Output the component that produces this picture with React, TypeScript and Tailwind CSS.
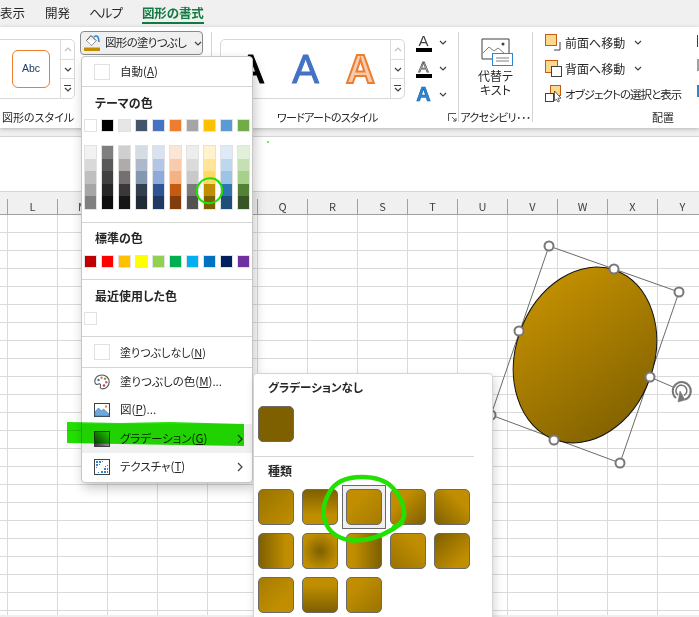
import React from "react";

const theme = ["bg-[#ffffff]","bg-[#000000]","bg-[#e7e6e6]","bg-[#44546a]","bg-[#4472c4]","bg-[#ed7d31]","bg-[#a5a5a5]","bg-[#ffc000]","bg-[#5b9bd5]","bg-[#70ad47]"];
const tints = [
  ["bg-[#f2f2f2]","bg-[#d9d9d9]","bg-[#bfbfbf]","bg-[#a6a6a6]","bg-[#808080]"],
  ["bg-[#7f7f7f]","bg-[#595959]","bg-[#404040]","bg-[#262626]","bg-[#0d0d0d]"],
  ["bg-[#d0cece]","bg-[#aeabab]","bg-[#757070]","bg-[#3a3838]","bg-[#171616]"],
  ["bg-[#d6dce4]","bg-[#adb9ca]","bg-[#8496b0]","bg-[#323f4f]","bg-[#222b35]"],
  ["bg-[#d9e2f3]","bg-[#b4c6e7]","bg-[#8eaadb]","bg-[#2f5496]","bg-[#1f3864]"],
  ["bg-[#fbe5d5]","bg-[#f7cbac]","bg-[#f4b183]","bg-[#c55a11]","bg-[#833c0b]"],
  ["bg-[#ededed]","bg-[#dbdbdb]","bg-[#c9c9c9]","bg-[#7b7b7b]","bg-[#525252]"],
  ["bg-[#fff2cc]","bg-[#fee599]","bg-[#ffd965]","bg-[#bf8f00]","bg-[#7f6000]"],
  ["bg-[#deeaf6]","bg-[#bdd7ee]","bg-[#9dc3e6]","bg-[#2e75b5]","bg-[#1f4e79]"],
  ["bg-[#e2efd9]","bg-[#c5e0b3]","bg-[#a8d08d]","bg-[#538135]","bg-[#375623]"],
];
const standard = ["bg-[#c00000]","bg-[#ff0000]","bg-[#ffc000]","bg-[#ffff00]","bg-[#92d050]","bg-[#00b050]","bg-[#00b0f0]","bg-[#0070c0]","bg-[#002060]","bg-[#7030a0]"];
const grads = [
  "bg-[linear-gradient(135deg,#9a7400,#c08e00)]",
  "bg-[linear-gradient(180deg,#7f6000,#c08e00_75%)]",
  "bg-[linear-gradient(135deg,#c08e00_30%,#a67c00)]",
  "bg-[linear-gradient(135deg,#c08e00_30%,#7f6000)]",
  "bg-[linear-gradient(45deg,#7f6000,#c08e00_70%)]",
  "bg-[linear-gradient(90deg,#7f6000,#c08e00_80%)]",
  "bg-[radial-gradient(circle,#7f6000,#c08e00_75%)]",
  "bg-[linear-gradient(90deg,#c08e00_20%,#7f6000)]",
  "bg-[linear-gradient(225deg,#c08e00_25%,#9a7400)]",
  "bg-[linear-gradient(135deg,#7f6000,#c08e00_80%)]",
  "bg-[linear-gradient(135deg,#a67c00,#c08e00_70%)]",
  "bg-[linear-gradient(180deg,#c08e00_20%,#7f6000)]",
  "bg-[linear-gradient(135deg,#c08e00_25%,#9a7400)]",
];
const cols = ["L","M","N","O","P","Q","R","S","T","U","V","W","X","Y"];

function Chev({ className = "", stroke = "#404040" }: { className?: string; stroke?: string }) {
  return (
    <svg width="8" height="5" viewBox="0 0 8 5" className={`shrink-0 ${className}`}>
      <path d="M1 1l3 3 3-3" fill="none" stroke={stroke} strokeWidth="1.2" />
    </svg>
  );
}
function ChevRight() {
  return (
    <svg width="6" height="10" viewBox="0 0 6 10" className="ml-auto mr-[9px]">
      <path d="M1 1l4 4-4 4" fill="none" stroke="#404040" strokeWidth="1.2" />
    </svg>
  );
}
function ScrollCol() {
  return (
    <div className="w-[14px] h-full flex flex-col border-l border-[#dcdcdc]">
      <div className="h-[20px] flex items-center justify-center border-b border-[#dcdcdc]"><svg width="8" height="5" viewBox="0 0 8 5"><path d="M1 4l3-3 3 3" fill="none" stroke="#c0c0c0" strokeWidth="1.2" /></svg></div>
      <div className="h-[19px] flex items-center justify-center border-b border-[#dcdcdc]"><Chev /></div>
      <div className="flex-1 flex flex-col items-center justify-center gap-[1px]"><div className="w-[7px] h-px bg-[#404040]" /><Chev /></div>
    </div>
  );
}
function Sep() {
  return <div className="w-px bg-[#d4d4d4] mt-[5px] mb-[6px] shrink-0" />;
}
function Label({ children, className = "" }: { children: React.ReactNode; className?: string }) {
  return <div className={`h-[21px] text-[11px] leading-[21px] whitespace-nowrap ${className}`}>{children}</div>;
}
function TextA({ bar, outline }: { bar?: boolean; outline?: boolean }) {
  return (
    <div className="h-[26px] flex items-center">
      <div className="w-[17px] flex flex-col items-center">
        {bar ? (
          <>
            <span className={`font-['Liberation_Sans'] text-[15px] leading-[13px] ${outline ? "text-white [-webkit-text-stroke:0.8px_#555555]" : "text-[#404040]"}`}>A</span>
            <div className="w-[16px] h-[4px] bg-black mt-[1px]" />
          </>
        ) : (
          <span className="font-['Liberation_Sans'] font-bold text-[20px] leading-[18px] text-[#2e86d0] [-webkit-text-stroke:0.6px_#0f5fa8]">A</span>
        )}
      </div>
      <Chev className="ml-[7px]" />
    </div>
  );
}
function ArrangeRow({ icon, text, chev, tight }: { icon: React.ReactNode; text: string; chev?: boolean; tight?: boolean }) {
  return (
    <div className="h-[26px] flex items-center">
      <div className="w-[20px] h-[20px] mr-0">{icon}</div>
      <span className={`whitespace-nowrap ${tight ? "text-[11.5px] tracking-[-0.95px]" : "text-[12px]"}`}>{text}</span>
      {chev && <Chev className="ml-[9px]" />}
    </div>
  );
}
function Swatch({ c }: { c: string }) {
  return <div className={`w-[13px] h-[13px] border border-[#e2e2e2] ${c}`} />;
}
function MenuHeading({ children, className = "" }: { children: React.ReactNode; className?: string }) {
  return <div className={`pl-[13px] font-bold text-[12px] leading-[16px] ${className}`}>{children}</div>;
}
function MenuSep({ className = "" }: { className?: string }) {
  return <div className={`h-px bg-[#d4d4d4] ${className}`} />;
}
function MenuRow({ icon, children, arrow, className = "" }: { icon: React.ReactNode; children: React.ReactNode; arrow?: boolean; className?: string }) {
  return (
    <div className={`h-[28px] flex items-center pl-[12px] text-[11.5px] whitespace-nowrap ${className}`}>
      <div className="w-[16px] h-[17px] mr-[10px] flex items-center justify-center shrink-0">{icon}</div>
      <span>{children}</span>
      {arrow && <ChevRight />}
    </div>
  );
}
const U = ({ children }: { children: React.ReactNode }) => <span className="underline underline-offset-1">{children}</span>;

function ColorMenu() {
  return (
    <div className="absolute left-[81px] top-[56px] w-[172px] h-[427px] bg-white border border-[#c6c6c6] rounded-[4px] shadow-[2px_5px_12px_rgba(0,0,0,0.22)] z-20 flex flex-col">
      <div className="h-[29px] flex items-center pl-[12px] text-[11.5px]">
        <div className="w-[16px] h-[16px] border border-[#e2e2e2] mr-[10px]" />
        <span>自動(<U>A</U>)</span>
      </div>
      <MenuSep />
      <MenuHeading className="mt-[8px]">テーマの色</MenuHeading>
      <div className="flex gap-[4px] pl-[2px] mt-[8px]">{theme.map((c, i) => <Swatch key={i} c={c} />)}</div>
      <div className="flex gap-[4px] pl-[2px] mt-[13px]">
        {tints.map((col, i) => (
          <div key={i} className="w-[13px] h-[65px] border border-[#e2e2e2] flex flex-col">
            {col.map((c, j) => <div key={j} className={`flex-1 ${c}`} />)}
          </div>
        ))}
      </div>
      <MenuSep className="mt-[12px]" />
      <MenuHeading className="mt-[7px]">標準の色</MenuHeading>
      <div className="flex gap-[4px] pl-[2px] mt-[9px]">{standard.map((c, i) => <Swatch key={i} c={c} />)}</div>
      <MenuSep className="mt-[11px]" />
      <MenuHeading className="mt-[8px]">最近使用した色</MenuHeading>
      <div className="pl-[2px] mt-[8px]"><Swatch c="bg-white" /></div>
      <MenuSep className="mt-[11px]" />
      <div className="h-[30px] flex items-center pl-[12px] text-[11px]">
        <div className="w-[16px] h-[16px] border border-[#e2e2e2] mr-[10px]" />
        <span>塗りつぶしなし(<U>N</U>)</span>
      </div>
      <MenuSep />
      <MenuRow icon={
        <svg width="16" height="16" viewBox="0 0 16 16">
          <path d="M8 1C3.500 1 .8 4 .8 7.500c0 3 2.200 3.200 3.800 2.600 1.600-.6 2.400.4 1.800 1.800-.6 1.600.4 3 2 3 3.600 0 6.800-3.200 6.800-7C15.200 4 12 1 8 1z" fill="#fff" stroke="#555" strokeWidth="1.100" />
          <circle cx="4.500" cy="6" r="1.200" fill="#2e75b5" /><circle cx="7.500" cy="3.800" r="1.200" fill="#ed7d31" /><circle cx="11" cy="4.800" r="1.200" fill="#70ad47" /><circle cx="12.300" cy="8.300" r="1.200" fill="#c55aa0" /><circle cx="10" cy="11.500" r="1.200" fill="#d13438" />
        </svg>}>塗りつぶしの色(<U>M</U>)...</MenuRow>
      <MenuRow icon={
        <svg width="16" height="14" viewBox="0 0 16 14">
          <rect x=".5" y=".5" width="15" height="13" fill="#fff" stroke="#404040" />
          <path d="M1 13V9l3.500-4 3 3 2-2 5.500 5v2z" fill="#6fa8dc" stroke="#2e75b5" strokeWidth=".6" />
          <rect x="11" y="2.500" width="2" height="2" fill="#ed7d31" />
        </svg>}>図(<U>P</U>)...</MenuRow>
      <MenuRow arrow className="h-[29px] bg-[#f0f0f0]" icon={
        <svg width="16" height="16" viewBox="0 0 16 16">
          <defs><linearGradient id="gi" x1="0" y1="1" x2="1" y2="0"><stop offset="0" stopColor="#303030" /><stop offset="1" stopColor="#e8e8e8" /></linearGradient></defs>
          <rect x=".5" y=".5" width="15" height="15" fill="url(#gi)" stroke="#404040" />
        </svg>}>グラデーション(<U>G</U>)</MenuRow>
      <MenuRow arrow icon={
        <svg width="16" height="16" viewBox="0 0 16 16">
          <rect x=".5" y=".5" width="15" height="15" fill="#fff" stroke="#404040" />
          <path d="M2 2h2v2H2zM5 2h2v2H5zM8 2h1v1H8zM2 5h2v2H2zM5 5h1v1H5zM2 8h1v1H2zM13 6h1v1h-1zM11 7h1v1h-1zM10 9h2v2h-2zM13 9h1v2h-1zM7 12h2v2H7zM10 12h2v2h-2zM13 12h1v2h-1zM4 13h1v1H4z" fill="#2e86d0" />
        </svg>}>テクスチャ(<U>T</U>)</MenuRow>
    </div>
  );
}

function GradientMenu() {
  return (
    <div className="absolute left-[253px] top-[373px] w-[240px] h-[262px] bg-white border border-[#d4d4d4] rounded-[4px] shadow-[2px_4px_10px_rgba(0,0,0,0.16)] z-30">
      <div className="h-[28px] flex items-center pl-[14px] font-bold text-[11.5px]">グラデーションなし</div>
      <div className="pl-[4px] mt-[4px]"><div className="w-[36px] h-[36px] rounded-[5px] border border-[#6a6a6a] bg-[#7f6000]" /></div>
      <MenuSep className="mt-[14px] w-[220px]" />
      <div className="h-[28px] flex items-center pl-[14px] font-bold text-[12px]">種類</div>
      <div className="grid grid-cols-[repeat(5,44px)] auto-rows-[44px]">
        {grads.map((g, i) => (
          <div key={i} className={`flex items-center justify-center ${i === 2 ? "border border-[#6a6a6a] bg-[#efefef]" : ""}`}>
            <div className={`w-[36px] h-[36px] rounded-[5px] border border-[#6a6a6a] ${g}`} />
          </div>
        ))}
      </div>
    </div>
  );
}

function Shape() {
  const handles = [[549,246],[614,269],[679,292],[519,331],[650,377],[491,415],[554,440],[620,463]];
  return (
    <svg width="699" height="617" viewBox="0 0 699 617" className="absolute left-0 top-0 z-10 pointer-events-none">
      <defs>
        <linearGradient id="oval" gradientUnits="userSpaceOnUse" x1="535" y1="285" x2="640" y2="430" gradientTransform="rotate(-19.500 585 355)">
          <stop offset="0" stopColor="#c49000" /><stop offset="1" stopColor="#7f6000" />
        </linearGradient>
      </defs>
      <polygon points="549,246 679,292 620,463 491,415" fill="none" stroke="#6a6a6a" strokeWidth="1" />
      <ellipse cx="585" cy="355" rx="69" ry="90" transform="rotate(19.500 585 355)" fill="url(#oval)" stroke="#111" strokeWidth="1" />
      <line x1="650" y1="377" x2="673" y2="387" stroke="#6a6a6a" />
      {handles.map(([x, y], i) => <circle key={i} cx={x} cy={y} r="4.500" fill="#fff" stroke="#777" strokeWidth="2" />)}
      <g fill="none" stroke="#777">
        <path d="M676 398a9 9 0 1 1 9 1.500" strokeWidth="2" />
        <path d="M678 395a5.500 5.500 0 1 1 6 .5" strokeWidth="1.600" />
        <path d="M680 391l-2 11 7-2z" fill="#777" strokeWidth=".6" />
      </g>
    </svg>
  );
}

function Scribbles() {
  return (
    <>
      <svg width="699" height="617" viewBox="0 0 699 617" className="absolute left-0 top-0 z-40 pointer-events-none mix-blend-multiply">
        <path d="M67 422 L120 423 L170 422 L244 424 L244 446 L180 445 L120 444 L67 443z" fill="#22e000" />
      </svg>
      <svg width="699" height="617" viewBox="0 0 699 617" className="absolute left-0 top-0 z-40 pointer-events-none">
        <path d="M199 184c3-5 10-7 16-5 6 3 8 9 7 14-2 7-8 11-15 10-7-1-11-7-10-13 0-3 1-5 3-7" fill="none" stroke="#22e000" strokeWidth="2" />
        <path d="M394 527c5-2 9-6 10-11 1-8-3-20-12-29-8-8-18-10-30-10-14 0-27 4-33 16-5 9-7 19-4 28 3 9 11 17 24 19 15 2 31-3 44-11 3-2 6-4 9-6" fill="none" stroke="#22e000" strokeWidth="4.500" strokeLinecap="round" />
        <rect x="267" y="141" width="2" height="2" fill="#6fe85f" />
      </svg>
    </>
  );
}

export default function App() {
  return (
    <div className="relative w-[699px] h-[617px] overflow-hidden bg-white text-[#262626] flex flex-col font-['Noto_Sans_CJK_JP','Noto_Sans',sans-serif] [font-feature-settings:'palt']">
      {/* tabs */}
      <div className="h-[27px] shrink-0 bg-[#f0f0f0] flex gap-[20px] text-[12.500px] leading-[26px]">
        <span>表示</span><span>開発</span><span className="-ml-px tracking-[-1px]">ヘルプ</span>
        <span className="h-[24px] font-bold text-[#107c41] border-b-2 border-[#107c41] tracking-[-0.1px]">図形の書式</span>
      </div>
      {/* ribbon */}
      <div className="h-[101px] shrink-0 bg-white flex shadow-[0_1px_4px_rgba(0,0,0,0.25)] z-[1] relative">
        <div className="w-[211px] shrink-0 flex flex-col">
          <div className="h-[80px] flex">
            <div className="w-[75px] h-[60px] mt-[12px] border border-l-0 border-[#d8d8d8] rounded-r-[5px] flex shrink-0">
              <div className="w-[60px] h-full flex items-center pl-[12px]">
                <div className="w-[38px] h-[38px] rounded-[6px] border border-[#ed7d31] bg-white flex items-center justify-center font-['Liberation_Sans'] text-[10.500px] text-[#1f3864]">Abc</div>
              </div>
              <ScrollCol />
            </div>
            <div className="ml-[5px] mt-[4px] w-[123px] h-[24px] rounded-[4px] border border-[#8a8a8a] bg-[#f0f0f0] flex items-center pl-[3px] text-[11.5px] tracking-[-0.7px] whitespace-nowrap">
              <svg width="17" height="17" viewBox="0 0 17 17" className="mr-[4px] shrink-0 -mt-[2px]">
                <path d="M7 1.500l5 5-4.500 5-5-5z" fill="#f0f0f0" stroke="#404040" strokeWidth="1" />
                <path d="M3 6.500h9l-4.500 5-5-5z" fill="#ffffff" />
                <path d="M10 3c2-2 4-1 4.500 1.500L15 8" fill="none" stroke="#2e86d0" strokeWidth="1.500" />
                <rect x="0" y="13.500" width="16" height="3.500" fill="#bf8f00" />
              </svg>
              <span>図形の塗りつぶし</span>
              <Chev className="ml-[8px]" />
            </div>
          </div>
          <Label className="pl-[2px]">図形のスタイル</Label>
        </div>
        <Sep />
        <div className="w-[246px] shrink-0 flex flex-col">
          <div className="h-[80px] flex">
            <div className="ml-[8px] w-[185px] h-[60px] mt-[12px] border border-[#d8d8d8] rounded-[5px] flex items-center shrink-0">
              <div className="w-[169px] flex pl-[2px] font-['Liberation_Sans'] text-[40px] leading-[44px]">
                <span className="w-[55px] text-center text-black [-webkit-text-stroke:1px_#000000]">A</span>
                <span className="w-[55px] text-center text-[#4472c4] [-webkit-text-stroke:1px_#4472c4]">A</span>
                <span className="w-[55px] text-center font-bold text-[#f8cbad] [-webkit-text-stroke:2px_#ed7d31]">A</span>
              </div>
              <ScrollCol />
            </div>
            <div className="ml-[10px] mt-[3px] flex flex-col">
              <TextA bar />
              <TextA bar outline />
              <TextA />
            </div>
          </div>
          <div className="flex items-center">
            <Label className="ml-[65px] tracking-[-0.7px]">ワードアートのスタイル</Label>
            <svg width="9" height="9" viewBox="0 0 9 9" className="ml-[70px]"><path d="M.5 8V.5H8M4 4l4 4M8 5v3H5" fill="none" stroke="#555" /></svg>
          </div>
        </div>
        <Sep />
        <div className="w-[73px] shrink-0 flex flex-col items-center">
          <div className="h-[80px] flex flex-col items-center">
            <svg width="32" height="30" viewBox="0 0 32 30" className="mt-[11px] ml-[3px]">
              <path d="M21 21H1V1h27v14" fill="none" stroke="#404040" />
              <path d="M2 15l6-6 5 4 4-3 6 5" fill="none" stroke="#808080" />
              <circle cx="22" cy="6" r="1.500" fill="#404040" />
              <rect x="11.500" y="15.500" width="20" height="12" fill="#fff" stroke="#2e86d0" />
              <path d="M15 20h13M15 23h13" stroke="#808080" />
            </svg>
            <div className="mt-[1px] text-[12px] leading-[14px] text-center">代替テ</div>
            <div className="text-[12px] leading-[14px] text-center">キスト</div>
          </div>
          <Label className="text-[10px] tracking-[-0.6px]">アクセシビリ･･･</Label>
        </div>
        <Sep />
        <div className="w-[164px] shrink-0 flex flex-col">
          <div className="h-[80px] pl-[12px] pt-[3px] flex flex-col">
            <ArrangeRow chev text="前面へ移動" icon={
              <svg width="20" height="20" viewBox="0 0 20 20" className="mt-[1px]">
                <path d="M9 16h6V8" fill="none" stroke="#404040" />
                <rect x=".5" y=".5" width="11" height="11" fill="#fad98f" stroke="#c55a11" />
              </svg>} />
            <ArrangeRow chev text="背面へ移動" icon={
              <svg width="20" height="20" viewBox="0 0 20 20" className="mt-[1px]">
                <rect x=".5" y=".5" width="12" height="12" fill="#fad98f" stroke="#c55a11" />
                <rect x="6.500" y="6.500" width="10" height="10" fill="#fff" stroke="#404040" />
              </svg>} />
            <ArrangeRow tight text="オブジェクトの選択と表示" icon={
              <svg width="20" height="20" viewBox="0 0 20 20" className="mt-px">
                <rect x="5.500" y=".5" width="10" height="10" fill="#fad98f" stroke="#c55a11" />
                <rect x=".5" y="8.500" width="8" height="8" fill="#fff" stroke="#404040" />
                <path d="M9.500 6v10l2-2 1.500 3 1.500-.8-1.500-3h3z" fill="#fff" stroke="#404040" strokeWidth=".8" />
              </svg>} />
          </div>
          <Label className="pl-[119px] text-[11.500px]">配置</Label>
        </div>
        <div className="w-[2px] flex flex-col pt-[8px] gap-[12px]">
          <div className="h-[12px] bg-[#404040] w-px" />
          <div className="h-[12px] bg-[#a0a0a0] w-[2px]" />
          <div className="h-[12px] mt-[2px] bg-[#2e86d0] w-[2px]" />
        </div>
      </div>
      {/* gap */}
      <div className="h-[8px] shrink-0 bg-[#efefef]" />
      {/* formula bar */}
      <div className="h-[56px] shrink-0 bg-white border-y border-[#d4d4d4]" />
      {/* column headers */}
      <div className="h-[23px] shrink-0 bg-[#f0f0f0] border-b border-[#a0a0a0] grid grid-cols-[8px_repeat(14,50px)]">
        <div className="h-[15px] self-end border-r border-[#a0a0a0]" />
        {cols.map((c) => (
          <div key={c} className="h-[15px] self-end border-r border-[#a0a0a0] flex items-center justify-center text-[11px] text-[#404040]">{c}</div>
        ))}
      </div>
      {/* cells */}
      <div className="flex-1 overflow-hidden grid grid-cols-[8px_repeat(14,50px)] auto-rows-[18px]">
        {Array.from({ length: 23 * 15 }).map((_, i) => (
          <div key={i} className="border-r border-b border-[#dadada]" />
        ))}
      </div>
      <div className="h-[2px] shrink-0 bg-[#eeeeee]" />
      <Shape />
      <ColorMenu />
      <GradientMenu />
      <Scribbles />
    </div>
  );
}
